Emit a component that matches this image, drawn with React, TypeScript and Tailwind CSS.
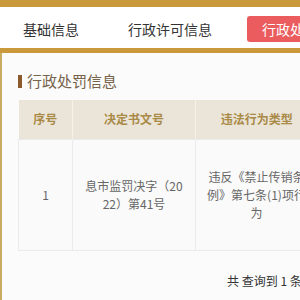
import React from 'react';

const font = { fontFamily: '"Noto Sans CJK SC", "Noto Sans", sans-serif' };

const App: React.FC = () => {
  return (
    <div className="w-[300px] h-[300px] overflow-hidden bg-[#fbfbfb]" style={font}>
      <div className="border-t-[7px] border-b-[5px] border-[#c9993b] bg-white h-[53px] flex items-center pt-[3px] whitespace-nowrap text-[14px] text-[#333]">
        <span className="ml-[23px]">基础信息</span>
        <span className="ml-[22px] w-px h-[14px] bg-[#ddd]" />
        <span className="ml-[27px]">行政许可信息</span>
        <span className="ml-[22px] w-px h-[14px] bg-[#ddd]" />
        <span className="ml-[13px] h-[26px] leading-[26px] px-[15px] rounded-[3px] bg-[#ea5c5d] text-white">
          行政处罚信息
        </span>
      </div>

      <div className="border-l-2 border-[#c9ab62] pl-[16px] pt-[20px] h-[247px]">
        <div className="flex items-center h-[16px]">
          <span className="w-[4px] h-[13px] bg-[#8a5a2a]" />
          <span className="ml-[5px] text-[15px] leading-[16px] text-[#76634a]">行政处罚信息</span>
        </div>

        <table className="mt-[11px] table-fixed w-[299px] min-w-[299px] border-collapse text-[12px]">
          <colgroup>
            <col className="w-[54px]" />
            <col className="w-[123px]" />
            <col className="w-[122px]" />
          </colgroup>
          <thead>
            <tr className="h-[39px] bg-[#ebe5d9] text-[#a98a47] font-bold">
              <th className="border-r border-[#f6f2ea]">序号</th>
              <th className="border-r border-[#f6f2ea]">决定书文号</th>
              <th>违法行为类型</th>
            </tr>
          </thead>
          <tbody>
            <tr className="h-[111px] bg-[#fafafa] text-[#666] text-center leading-[18px]">
              <td className="border border-[#ebebeb]">1</td>
              <td className="border border-[#ebebeb] px-[11px] break-all">息市监罚决字（2022）第41号</td>
              <td className="border border-[#ebebeb] px-[10px] break-all">违反《禁止传销条例》第七条(1)项行为</td>
            </tr>
          </tbody>
        </table>

        <div className="mt-[21px] pl-[209px] whitespace-nowrap text-[12px] text-[#333]">
          共 查询到 1 条记录
        </div>
      </div>
    </div>
  );
};

export default App;
